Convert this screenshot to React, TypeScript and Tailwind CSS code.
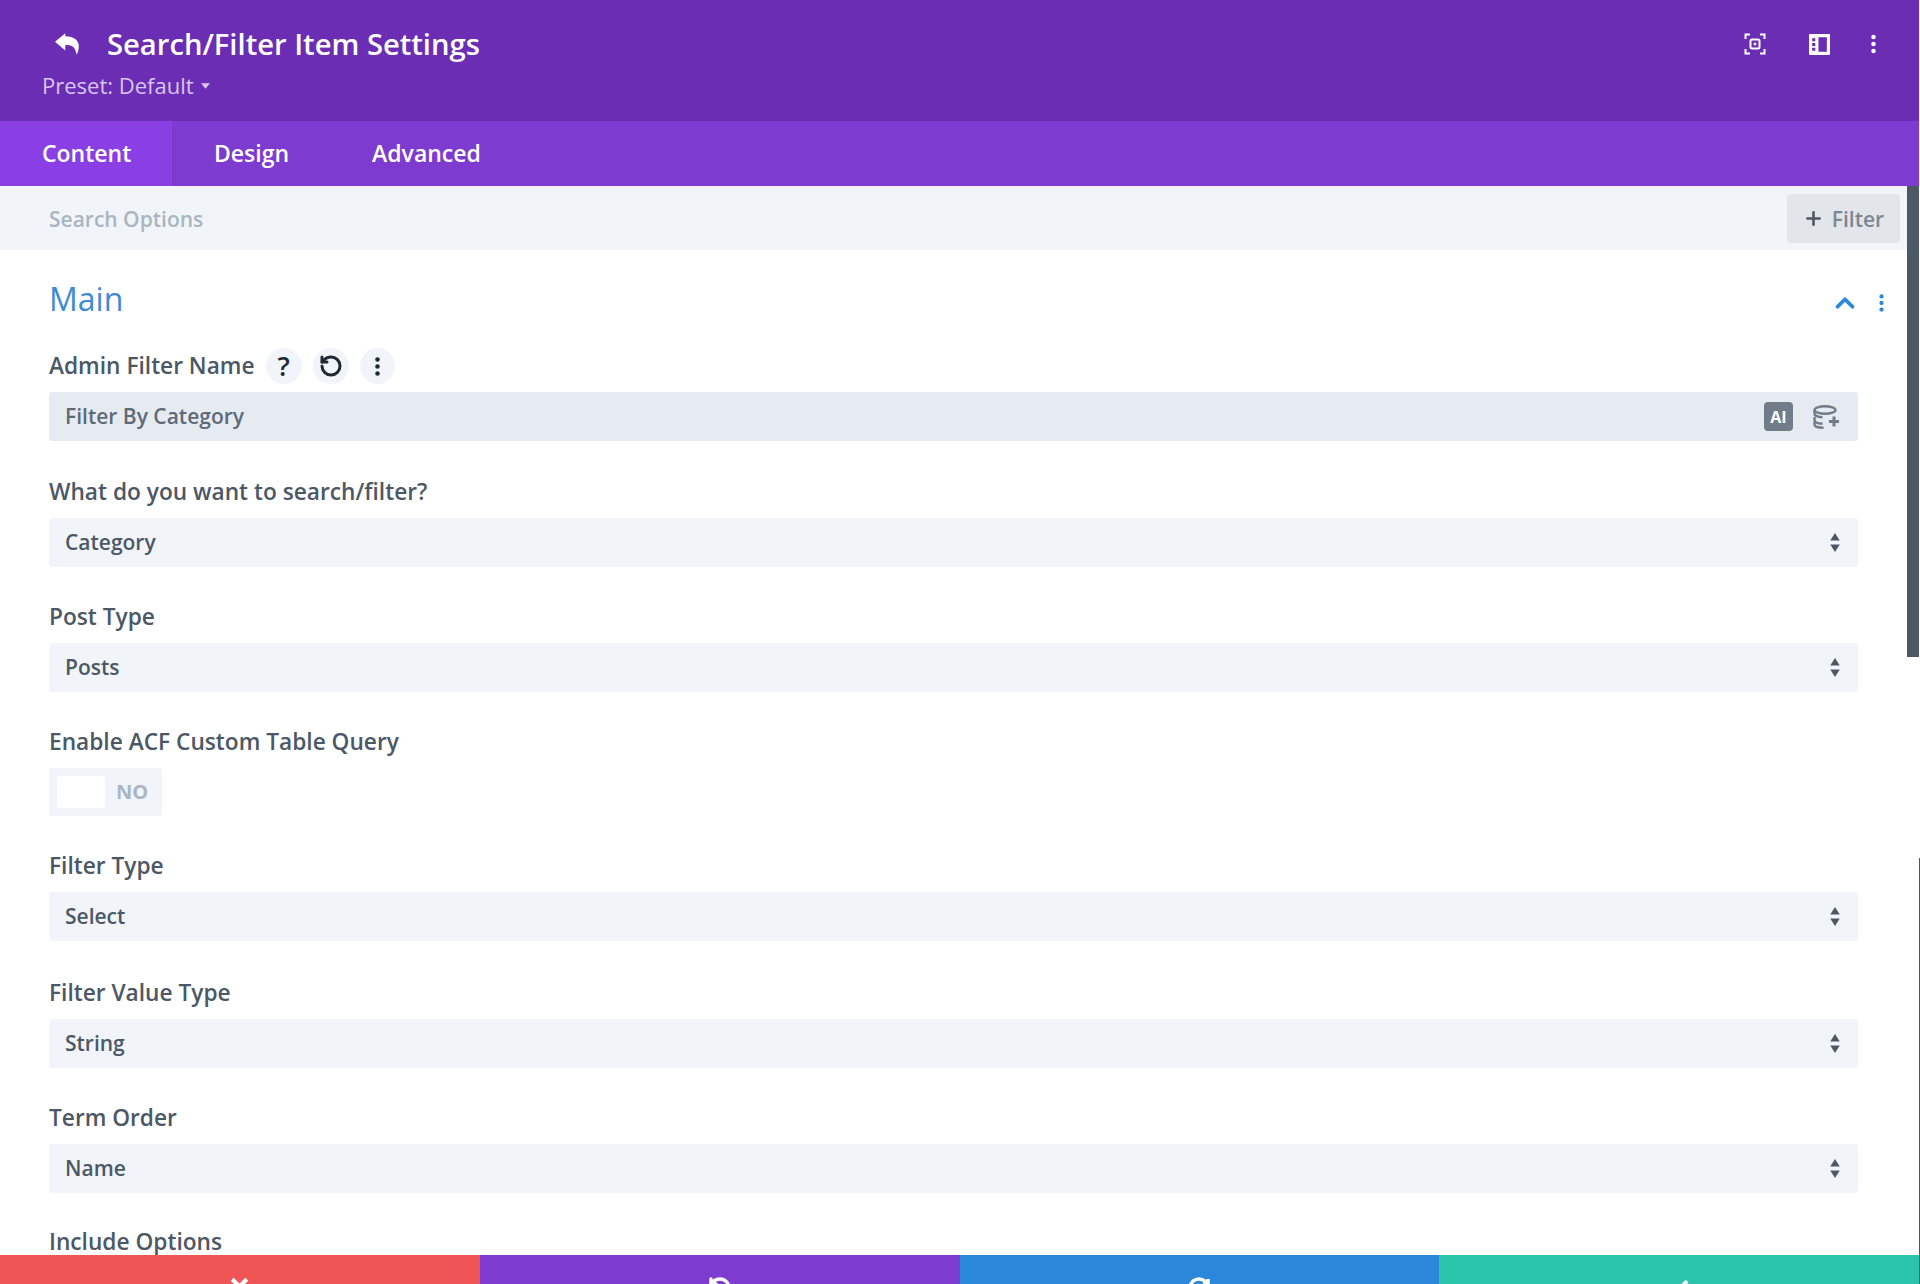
import { ReactNode } from 'react';
import { ChevronUp, Plus, RotateCcw } from 'lucide-react';

const font = { fontFamily: '"Open Sans", "Noto Sans", sans-serif' };

function Dots({ className }: { className: string }) {
  return (
    <svg viewBox="0 0 8 22" className={className} fill="currentColor">
      <circle cx="4" cy="3" r="2.6" />
      <circle cx="4" cy="11" r="2.6" />
      <circle cx="4" cy="19" r="2.6" />
    </svg>
  );
}

function SelectArrows() {
  return (
    <svg viewBox="0 0 10 20" className="h-[19px] w-[10px] text-[#4c5866]" fill="currentColor">
      <path d="M5 0l5 8H0z" />
      <path d="M5 20l5-8H0z" />
    </svg>
  );
}

function Field({ label, top, children }: { label: string; top: string; children: ReactNode }) {
  return (
    <div className={top}>
      <div className="flex h-[30px] items-center text-[22.7px] font-semibold leading-[30px] text-[#4c5866]">{label}</div>
      <div className="mt-[11px]">{children}</div>
    </div>
  );
}

function SelectBox({ value }: { value: string }) {
  return (
    <div className="flex h-[49px] items-center justify-between rounded-[3px] bg-[#f1f5f9] pl-4 pr-[18px] text-[21px] font-semibold text-[#4c5866]">
      <span>{value}</span>
      <SelectArrows />
    </div>
  );
}

export default function App() {
  return (
    <div className="relative flex h-[1284px] w-[1920px] flex-col overflow-hidden bg-white" style={font}>
      <div className="mr-px flex h-[121px] shrink-0 flex-col bg-[#6a2db3] pl-[42px] pr-[42px] text-white">
        <div className="mt-[26px] flex h-[36px] items-center">
          <svg viewBox="0 0 24 20" className="ml-[13px] h-[22px] w-[26px]" fill="currentColor">
            <path d="M9.5 0L0 8l9.5 8v-5c5.5 0 9 1 10.5 9 .8-1.6 2-5 2-8 0-5.500-4.500-9-12.500-9.200z" />
          </svg>
          <span className="ml-[26px] text-[29.2px] font-semibold leading-[36px]">Search/Filter Item Settings</span>
          <div className="ml-auto flex items-center">
            <svg viewBox="0 0 22 22" className="h-[22px] w-[22px]" fill="none" stroke="currentColor" strokeWidth="2">
              <path d="M6 1.500H1.500V6M16 1.500h4.500V6M6 20.500H1.500V16M16 20.500h4.500V16" />
              <rect x="6.500" y="6.500" width="9" height="9" rx="1.500" />
              <rect x="10" y="10" width="2" height="2" fill="currentColor" strokeWidth="0.500" />
            </svg>
            <svg viewBox="0 0 20 20" className="ml-[43px] h-[21px] w-[21px]" fill="currentColor">
              <path d="M1 0h18a1 1 0 011 1v18a1 1 0 01-1 1H1a1 1 0 01-1-1V1a1 1 0 011-1zm8 3v14h8V3zM3 4v3h3V4zm0 4.500v3h3v-3zM3 13v3h3v-3z" fillRule="evenodd" />
            </svg>
            <Dots className="ml-[40px] h-[20px] w-[7px]" />
          </div>
        </div>
        <div className="mt-[9px] flex items-center text-[22px] font-medium leading-[28px] text-[#d9c5f0]">
          Preset: Default
          <svg viewBox="0 0 10 6" className="ml-[7px] mt-px h-[6px] w-[9px]" fill="currentColor">
            <path d="M0 0h10L5 6z" />
          </svg>
        </div>
      </div>

      <div className="mr-px flex h-[65px] shrink-0 bg-[#7e3bd0] pb-[1px] text-[23px] font-semibold text-white">
        <div className="-mb-[1px] flex w-[172px] items-center bg-[#8a3fe5] pb-[1px] pl-[42px]">Content</div>
        <div className="ml-[42px] flex items-center">Design</div>
        <div className="ml-[83px] flex items-center">Advanced</div>
      </div>

      <div className="mr-[13px] flex h-[64px] shrink-0 items-center justify-between bg-[#f1f5f9] pl-[49px] pr-[7px]">
        <span className="pt-[4px] text-[21px] font-semibold text-[#a9b6c2]">Search Options</span>
        <div className="flex h-[49px] w-[113px] items-center justify-center rounded-[4px] bg-[#e2e6ea] text-[21px] font-semibold text-[#7d8793]">
          <Plus className="mr-[8px] h-[21px] w-[21px] text-[#4c5866]" strokeWidth={3} />
          <span className="pt-[4px]">Filter</span>
        </div>
      </div>

      <div className="min-h-0 flex-1 overflow-hidden pl-[49px] pr-[62px]">
        <div className="mt-[28px] flex h-[42px] items-center justify-between">
          <span className="text-[32px] font-normal leading-[42px] text-[#3f8ad6]">Main</span>
          <div className="-mr-[28px] mt-[7px] flex items-center text-[#2b87da]">
            <ChevronUp className="h-[30px] w-[30px]" strokeWidth={3} />
            <Dots className="ml-[18px] mr-[1px] h-[18px] w-[7px]" />
          </div>
        </div>

        <div className="mt-[28px] flex h-[36px] items-center">
          <span className="text-[22.7px] font-semibold text-[#4c5866]">Admin Filter Name</span>
          <div className="ml-[11px] flex h-[36px] w-[36px] items-center justify-center rounded-full bg-[#f1f5f9] text-[27px] font-semibold text-[#1f2933]">?</div>
          <div className="ml-[11px] flex h-[36px] w-[36px] items-center justify-center rounded-full bg-[#f1f5f9]">
            <RotateCcw className="h-[24px] w-[24px] text-[#1f2933]" strokeWidth={3} />
          </div>
          <div className="ml-[11px] flex h-[36px] w-[35px] items-center justify-center rounded-full bg-[#f1f5f9] text-[#1f2933]">
            <Dots className="h-[21px] w-[7px]" />
          </div>
        </div>

        <div className="mt-[8px] flex h-[49px] items-center justify-between rounded-[3px] bg-[#e6ebf1] pl-4 pr-[17px] text-[21px] font-semibold text-[#5d6a78]">
          <span>Filter By Category</span>
          <div className="flex items-center">
            <span className="flex h-[29px] w-[29px] items-center justify-center rounded-[4px] bg-[#717c89] text-[16px] font-bold text-white">AI</span>
            <svg viewBox="0 0 28 24" className="ml-[20px] h-[24px] w-[28px] text-[#717c89]" fill="none" stroke="currentColor" strokeWidth="2.400">
              <ellipse cx="12" cy="5" rx="10.500" ry="3.800" />
              <path d="M1.500 5v3.500c0 2 3.500 3.600 8 3.800M1.500 12v3c0 2 3.500 3.500 8 3.800M1.500 16.500v3c0 2 4 3.300 9 3.300" />
              <path d="M21 11.500v10M16 16.500h10" strokeWidth="3" />
            </svg>
          </div>
        </div>

        <Field label="What do you want to search/filter?" top="mt-[36px]">
          <SelectBox value="Category" />
        </Field>
        <Field label="Post Type" top="mt-[35px]">
          <SelectBox value="Posts" />
        </Field>
        <Field label="Enable ACF Custom Table Query" top="mt-[35px]">
          <div className="flex h-[48px] w-[113px] items-center rounded-[3px] bg-[#f1f5f9] pl-[8px]">
            <div className="h-[32px] w-[48px] rounded-[3px] bg-white" />
            <span className="ml-[11px] text-[20px] font-bold text-[#a9b6c2]">NO</span>
          </div>
        </Field>
        <Field label="Filter Type" top="mt-[35px]">
          <SelectBox value="Select" />
        </Field>
        <Field label="Filter Value Type" top="mt-[37px]">
          <SelectBox value="String" />
        </Field>
        <Field label="Term Order" top="mt-[35px]">
          <SelectBox value="Name" />
        </Field>
        <div className="mt-[34px] text-[22.7px] font-semibold leading-[30px] text-[#4c5866]">Include Options</div>
      </div>

      {/* scrollbar thumb and the sliver of the page behind the panel */}
      <div className="absolute right-[1px] top-[186px] h-[471px] w-[12px] bg-[#4c5866]" />
      <div className="absolute bottom-0 right-0 top-[858px] w-px bg-[#555555]" />

      <div className="mr-px grid h-[29px] shrink-0 grid-cols-4 text-white">
        <div className="flex justify-center overflow-hidden bg-[#ef5555] pt-[21px]">
          <svg viewBox="0 0 20 20" className="h-[21px] w-[21px] shrink-0" fill="none" stroke="currentColor" strokeWidth="4">
            <path d="M3 3l14 14M17 3L3 17" />
          </svg>
        </div>
        <div className="flex justify-center overflow-hidden bg-[#7e3bd0] pt-[21px]">
          <RotateCcw className="h-[24px] w-[24px] shrink-0" strokeWidth={3.500} />
        </div>
        <div className="flex justify-center overflow-hidden bg-[#2b87da] pt-[21px]">
          <svg viewBox="0 0 24 24" className="h-[24px] w-[24px] shrink-0" fill="none" stroke="currentColor" strokeWidth="3.500">
            <path d="M21 12a9 9 0 1 1-3-6.700L21 8M21 3v5h-5" />
          </svg>
        </div>
        <div className="flex justify-center overflow-hidden bg-[#29c4a9] pt-[20px]">
          <svg viewBox="0 0 24 24" className="h-[24px] w-[24px] shrink-0" fill="none" stroke="currentColor" strokeWidth="4">
            <path d="M4 13l5 5L20 6" />
          </svg>
        </div>
      </div>
    </div>
  );
}
